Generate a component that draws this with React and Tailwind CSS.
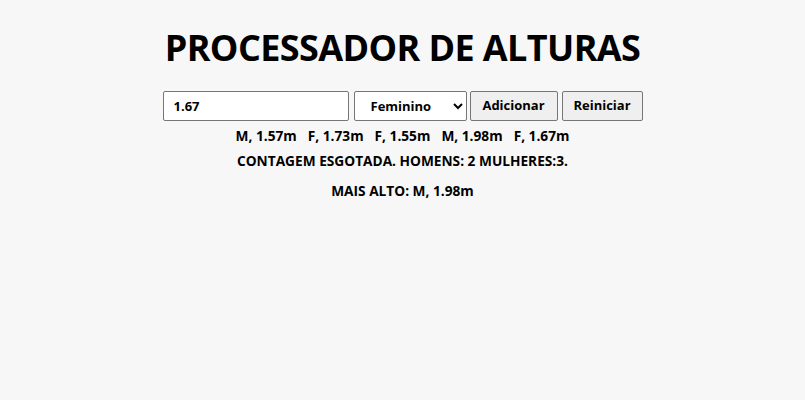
import React, { useState } from 'react';

const App = () => {
  const [altura, setAltura] = useState('1.67');
  const [sexo, setSexo] = useState('F');
  const pessoas = [
    { s: 'M', a: '1.57' },
    { s: 'F', a: '1.73' },
    { s: 'F', a: '1.55' },
    { s: 'M', a: '1.98' },
    { s: 'F', a: '1.67' },
  ];

  return (
    <div className="min-h-screen bg-[#f7f7f7] font-['Open_Sans',sans-serif] font-bold text-black flex flex-col items-center">
      <h1 className="mt-[23px] text-[36px] leading-[50px] tracking-[-0.6px]">PROCESSADOR DE ALTURAS</h1>
      <div className="mt-[18px] flex items-center gap-[4px] text-[13px]">
        <input
          value={altura}
          onChange={(e) => setAltura(e.target.value)}
          className="w-[186px] h-[30px] px-[10px] bg-white border border-[#767676] rounded-[2px] outline-none"
        />
        <select
          value={sexo}
          onChange={(e) => setSexo(e.target.value)}
          className="ml-[1px] mr-[-1px] w-[113px] h-[30px] pl-[12px] bg-white border border-[#767676] rounded-[2px]"
        >
          <option value="M">Masculino</option>
          <option value="F">Feminino</option>
        </select>
        <button className="w-[88px] h-[30px] bg-[#efefef] border border-[#767676] rounded-[2px]">Adicionar</button>
        <button className="w-[81px] h-[30px] bg-[#efefef] border border-[#767676] rounded-[2px]">Reiniciar</button>
      </div>
      <div className="mt-[4px] flex gap-[11px] text-[13.7px] leading-[22px]">
        {pessoas.map((p, i) => (
          <span key={i}>{p.s}, {p.a}m</span>
        ))}
      </div>
      <p className="mt-[3px] text-[13.7px] leading-[22px]">CONTAGEM ESGOTADA. HOMENS: 2 MULHERES:3.</p>
      <p className="mt-[8px] text-[13.7px] leading-[22px]">MAIS ALTO: M, 1.98m</p>
    </div>
  );
};

export default App;
